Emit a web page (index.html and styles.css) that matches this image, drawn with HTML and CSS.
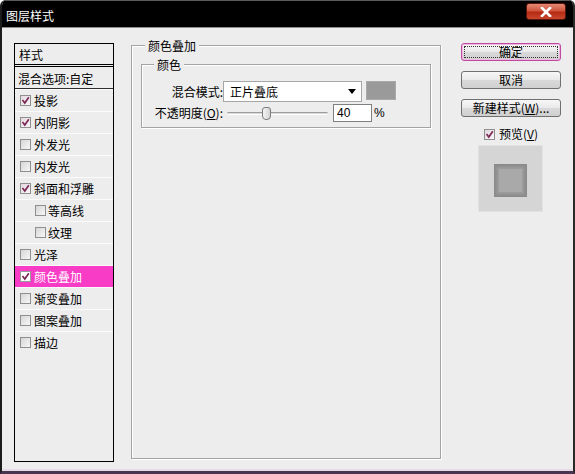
FILE: index.html
```html
<!DOCTYPE html>
<html lang="zh-CN">
<head>
<meta charset="utf-8">
<title>图层样式</title>
<link rel="stylesheet" href="styles.css">
</head>
<body>
<div class="win">
  <div class="titlebar">
    <span class="title">图层样式</span>
    <div class="close">
      <svg width="12" height="10" viewBox="0 0 12 10"><path d="M2 1 L10 9 M10 1 L2 9" stroke="#fff" stroke-width="2.6" stroke-linecap="square"/></svg>
    </div>
  </div>
  <div class="main">
    <div class="panel">
      <div class="ph">样式</div>
      <div class="blend">混合选项:自定</div>
      <div class="item"><span class="cb on"><svg width="9" height="9" viewBox="0 0 9 9"><path d="M1.5 4 L3.8 7 L7.8 1.2" stroke="#7b2a58" stroke-width="1.7" fill="none"/></svg></span><span>投影</span></div>
      <div class="item"><span class="cb on"><svg width="9" height="9" viewBox="0 0 9 9"><path d="M1.5 4 L3.8 7 L7.8 1.2" stroke="#7b2a58" stroke-width="1.7" fill="none"/></svg></span><span>内阴影</span></div>
      <div class="item"><span class="cb"></span><span>外发光</span></div>
      <div class="item"><span class="cb"></span><span>内发光</span></div>
      <div class="item"><span class="cb on"><svg width="9" height="9" viewBox="0 0 9 9"><path d="M1.5 4 L3.8 7 L7.8 1.2" stroke="#7b2a58" stroke-width="1.7" fill="none"/></svg></span><span>斜面和浮雕</span></div>
      <div class="item sub"><span class="cb"></span><span>等高线</span></div>
      <div class="item sub"><span class="cb"></span><span>纹理</span></div>
      <div class="item"><span class="cb"></span><span>光泽</span></div>
      <div class="item sel"><span class="cb on white"><svg width="9" height="9" viewBox="0 0 9 9"><path d="M1.5 4 L3.8 7 L7.8 1.2" stroke="#7b2a58" stroke-width="1.7" fill="none"/></svg></span><span>颜色叠加</span></div>
      <div class="item"><span class="cb"></span><span>渐变叠加</span></div>
      <div class="item"><span class="cb"></span><span>图案叠加</span></div>
      <div class="item"><span class="cb"></span><span>描边</span></div>
    </div>

    <div class="grp outer">
      <div class="gt">颜色叠加</div>
      <div class="grp inner">
        <div class="gt">颜色</div>
        <div class="row r1">
          <label class="lbl">混合模式:</label>
          <div class="select"><span>正片叠底</span>
            <svg width="8" height="5" viewBox="0 0 8 5"><path d="M0 0 H8 L4 5 Z" fill="#000"/></svg>
          </div>
          <div class="swatch"></div>
        </div>
        <div class="row r2">
          <label class="lbl">不透明度(<u>O</u>):</label>
          <div class="slider">
            <div class="track"></div>
            <div class="thumb"></div>
          </div>
          <div class="num">40</div>
          <span class="pct">%</span>
        </div>
      </div>
    </div>

    <div class="side">
      <div class="btn ok">确定</div>
      <div class="btn">取消</div>
      <div class="btn">新建样式(<u>W</u>)...</div>
      <div class="pv"><span class="cb on"><svg width="9" height="9" viewBox="0 0 9 9"><path d="M1.5 4 L3.8 7 L7.8 1.2" stroke="#7b2a58" stroke-width="1.7" fill="none"/></svg></span><span>预览(<u>V</u>)</span></div>
      <div class="preview"><div class="sq"></div></div>
    </div>
  </div>
</div>
</body>
</html>
```

FILE: styles.css
```css
* { box-sizing: border-box; }
html, body { margin: 0; padding: 0; }
body {
  width: 575px;
  height: 474px;
  background: #ffffff;
  font-family: "Noto Sans CJK SC", "Noto Sans", sans-serif;
  font-size: 12px;
  color: #000;
  overflow: hidden;
}
u { text-decoration: underline; text-underline-offset: 1px; }

.win {
  width: 575px;
  height: 474px;
  background: #ededed;
  border-left: 2px solid #1c1c1c;
  border-right: 2px solid #2a2a2a;
  border-bottom: 3px solid #4a3550;
  border-radius: 6px 6px 0 0;
  overflow: hidden;
  display: flex;
  flex-direction: column;
  box-shadow: inset 0 -2px 0 #e6dce6;
}

.titlebar {
  height: 28px;
  flex: none;
  background: #000;
  border-top: 1px solid #5a5a5a;
  border-bottom: 1px solid #8c8c8c;
  display: flex;
  justify-content: space-between;
  align-items: flex-start;
  padding: 0 7px 0 4px;
}
.title {
  color: #fff;
  line-height: 14px;
  margin-top: 8px;
}
.close {
  width: 40px;
  height: 17px;
  margin-top: 2px;
  border: 1px solid #5a150c;
  border-radius: 3px;
  background: linear-gradient(#e48a78 0%, #cf553c 45%, #b52a14 55%, #c9472c 100%);
  display: flex;
  align-items: center;
  justify-content: center;
}

.main {
  flex: 1;
  display: flex;
  align-items: flex-start;
  padding: 15px 0 0 12px;
}

/* left list */
.panel {
  width: 100px;
  height: 419px;
  border: 1px solid #000;
  flex: none;
}
.ph {
  height: 23px;
  border-bottom: 3px double #000;
  padding: 2px 0 0 4px;
  line-height: 18px;
}
.blend {
  height: 22px;
  border-bottom: 1px solid #2e2e2e;
  padding: 2px 0 0 3px;
  line-height: 19px;
  white-space: nowrap;
}
.item {
  height: 22px;
  border-top: 1px solid #fbfbfb;
  display: flex;
  align-items: center;
  padding-left: 5px;
  gap: 3px;
  line-height: 21px;
  white-space: nowrap;
}
.item.sub { padding-left: 20px; gap: 2px; }
.item.sel { background: #f83cc6; color: #fff; border-top-color: #fbfbfb; }

.cb {
  width: 11px;
  height: 11px;
  flex: none;
  border: 1px solid #8f8f8f;
  background: linear-gradient(135deg, #d6d6d6, #f7f7f7);
  display: flex;
  align-items: center;
  justify-content: center;
}
.cb.on { background: linear-gradient(135deg, #e4d8de, #faf6f8); }
.cb.white { background: #fff; border-color: #9a9a9a; }

/* group boxes */
.grp {
  border: 1px solid #a3a3a3;
  box-shadow: inset 1px 1px 0 #fff, 1px 1px 0 #fff;
}
.gt {
  width: max-content;
  background: #ededed;
  padding: 0 3px;
  line-height: 14px;
}
.outer {
  flex: none;
  width: 310px;
  height: 414px;
  margin: 2px 0 0 17px;
}
.outer > .gt { margin: -7px 0 0 13px; }
.inner {
  width: 290px;
  margin: 11px 0 0 9px;
  padding-bottom: 5px;
}
.inner > .gt { margin: -7px 0 0 12px; }

.row { display: flex; align-items: flex-start; }
.r1 { margin-top: 9px; height: 21px; }
.r2 { margin-top: 2px; height: 18px; }
.lbl {
  width: 81px;
  text-align: right;
  white-space: nowrap;
  flex: none;
}
.r1 .lbl { line-height: 21px; }
.r2 .lbl { line-height: 18px; }

.select {
  width: 139px;
  height: 21px;
  background: #fff;
  border: 1px solid #a6a6a6;
  display: flex;
  align-items: center;
  justify-content: space-between;
  padding: 0 5px 0 6px;
  line-height: 19px;
}
.swatch {
  width: 30px;
  height: 19px;
  margin-left: 4px;
  background: #9a9a9a;
  border: 1px solid #a9a9a9;
}

.slider {
  position: relative;
  width: 101px;
  height: 18px;
  margin-left: 4px;
  flex: none;
}
.track {
  margin-top: 8px;
  height: 3px;
  border-radius: 2px;
  background: #d9d9d9;
  border-top: 1px solid #9d9d9d;
  border-bottom: 1px solid #fff;
}
.thumb {
  position: absolute;
  left: 35px;
  top: 3px;
  width: 9px;
  height: 13px;
  border: 1px solid #7a7a7a;
  border-radius: 3px 3px 4px 4px;
  background: linear-gradient(90deg, #f4f4f4, #d4d4d4);
}
.num {
  width: 39px;
  height: 18px;
  margin-left: 5px;
  background: #fff;
  border: 1px solid #7f7f7f;
  padding-left: 3px;
  line-height: 16px;
  font-family: "Liberation Sans", "Noto Sans CJK SC", sans-serif;
}
.pct {
  margin-left: 2px;
  line-height: 18px;
  font-family: "Liberation Sans", "Noto Sans CJK SC", sans-serif;
}

/* right side */
.side {
  flex: none;
  width: 100px;
  margin-left: 20px;
  display: flex;
  flex-direction: column;
  align-items: center;
}
.btn {
  width: 100px;
  height: 18px;
  border: 1px solid #707070;
  border-radius: 3px;
  background: linear-gradient(#f7f7f7 0%, #e9e9e9 50%, #d9d9d9 51%, #d0d0d0 100%);
  text-align: center;
  line-height: 16px;
  margin-bottom: 10px;
  white-space: nowrap;
}
.btn.ok {
  border-color: #c04aa2;
  box-shadow: inset 0 0 0 1px #f0b8e0;
  outline: 1px dotted #333;
  outline-offset: -4px;
}
.pv {
  display: flex;
  align-items: center;
  gap: 4px;
  height: 12px;
  line-height: 12px;
  margin-top: 1px;
  white-space: nowrap;
}
.preview {
  width: 65px;
  height: 67px;
  margin-top: 5px;
  margin-left: -2px;
  background: #d5d5d5;
  border: 1px solid #e2e2e2;
  display: flex;
  align-items: center;
  justify-content: center;
  padding-top: 3px;
}
.sq {
  width: 33px;
  height: 33px;
  background: #a9a9a9;
  border: 1px solid #8a8a8a;
  box-shadow: inset 0 0 2px 2px #8e8e8e, inset 0 0 0 4px #9c9c9c;
}
```
